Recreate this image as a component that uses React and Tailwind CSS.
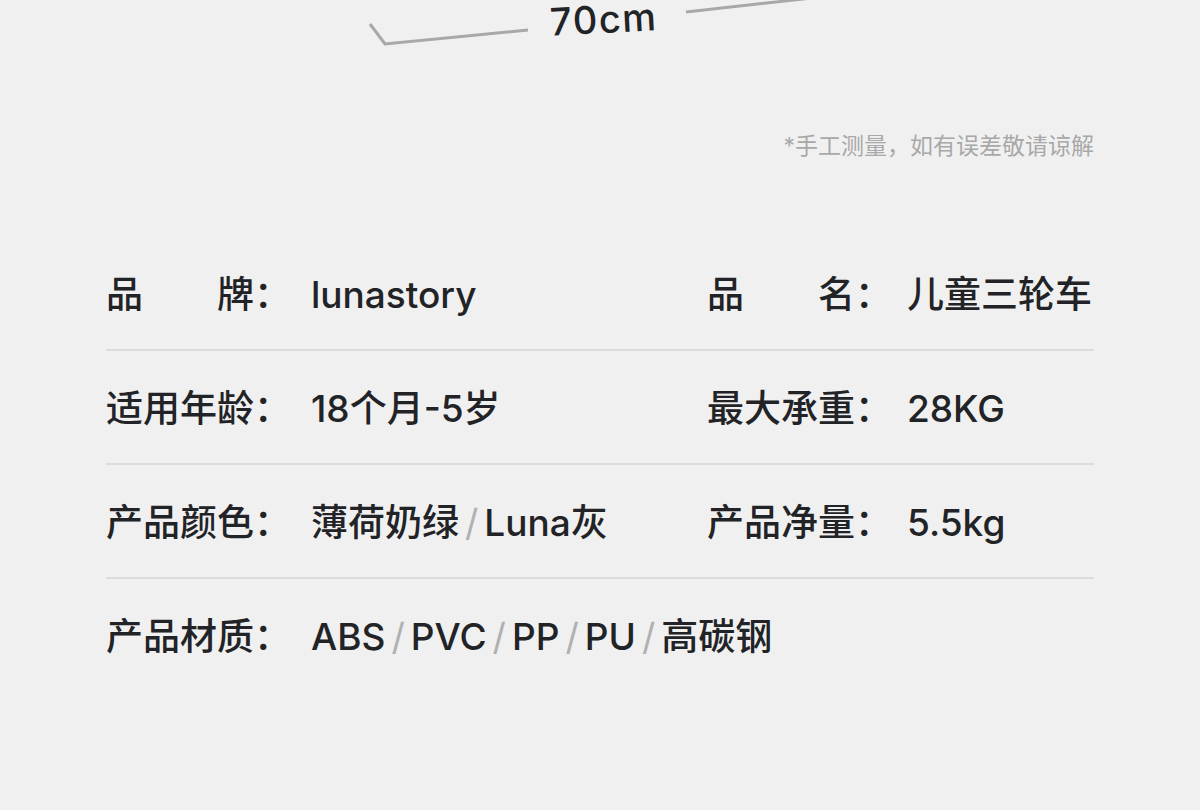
import React from 'react';

const font = { fontFamily: 'Inter, "Noto Sans CJK SC", sans-serif' };

const Slash = () => <span className="text-[#b0b0b0] mx-[6px] font-normal">/</span>;

const rows = [
  [
    { label: ['品', '牌'], value: 'lunastory' },
    { label: ['品', '名'], value: '儿童三轮车' },
  ],
  [
    { label: ['适用年龄'], value: '18个月-5岁' },
    { label: ['最大承重'], value: '28KG' },
  ],
  [
    {
      label: ['产品颜色'],
      value: (
        <>
          薄荷奶绿
          <Slash />
          Luna灰
        </>
      ),
    },
    { label: ['产品净量'], value: '5.5kg' },
  ],
  [
    {
      label: ['产品材质'],
      value: (
        <>
          ABS<Slash />PVC<Slash />PP<Slash />PU<Slash />高碳钢
        </>
      ),
    },
  ],
];

const Cell = ({ item, wide }) => (
  <div className={`flex items-center ${wide ? 'flex-1' : 'w-[601px] shrink-0'}`}>
    <div className={`${wide ? 'w-[200px]' : 'w-[205px]'} shrink-0 flex`}>
      <div className="w-[148px] flex justify-between">
        {item.label.map((t) => (
          <span key={t}>{t}</span>
        ))}
      </div>
      <span>：</span>
    </div>
    <div className="whitespace-nowrap">{item.value}</div>
  </div>
);

const App = () => {
  return (
    <div className="w-[1200px] h-[810px] bg-[#f0f0f0] overflow-hidden text-[#222326]" style={font}>
      <div className="relative h-[60px]">
        <svg width="1200" height="60" className="absolute left-0 top-0">
          <polyline points="370,24 385,44 528,30" fill="none" stroke="#a8a8a8" strokeWidth="3" />
          <line x1="686" y1="12" x2="812" y2="-2" stroke="#a8a8a8" strokeWidth="3" />
        </svg>
        <div className="absolute left-[550px] top-0 text-[38px] font-medium -rotate-3 tracking-[1.5px] leading-[38px]">
          70cm
        </div>
      </div>

      <div className="px-[106px]">
        <div className="flex justify-end mt-[72px] text-[23px] text-[#a8a8a8] leading-[28px]">
          *手工测量，如有误差敬请谅解
        </div>

        <div className="mt-[77px] text-[37px] leading-[40px] font-medium">
          {rows.map((r, i) => (
            <div
              key={i}
              className={`flex pt-[38px] pb-[34px] ${i < rows.length - 1 ? 'border-b-2 border-[#dcdcdc]' : ''}`}
            >
              <Cell item={r[0]} />
              {r[1] && <Cell item={r[1]} wide />}
            </div>
          ))}
        </div>
      </div>
    </div>
  );
};

export default App;
